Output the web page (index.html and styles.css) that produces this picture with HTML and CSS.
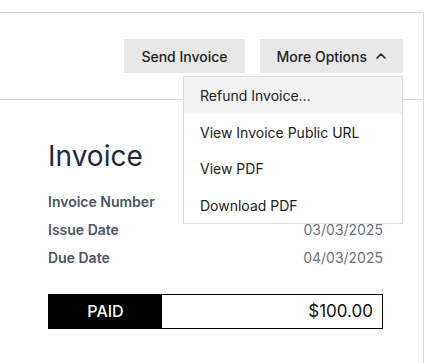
FILE: index.html
```html
<!DOCTYPE html>
<html lang="en">
<head>
    <meta charset="UTF-8">
    <meta name="viewport" content="width=device-width, initial-scale=1.0">
    <title>Invoice</title>
    <link rel="stylesheet" href="styles.css">
</head>
<body>
    <div class="invoice-card">
        <div class="invoice-actions">
            <button class="action-btn">Send Invoice</button>
            <div class="menu">
                <button class="action-btn">
                    More Options
                    <svg class="chevron" width="10" height="6" viewBox="0 0 10 6">
                        <path d="M1 5 L5 1.2 L9 5" fill="none" stroke="#222" stroke-width="1.6" stroke-linecap="round" stroke-linejoin="round"/>
                    </svg>
                </button>
                <ul class="menu-list">
                    <li class="menu-item active">Refund Invoice...</li>
                    <li class="menu-item">View Invoice Public URL</li>
                    <li class="menu-item">View PDF</li>
                    <li class="menu-item">Download PDF</li>
                </ul>
            </div>
        </div>

        <div class="invoice-body">
            <h1 class="invoice-title">Invoice</h1>
            <div class="meta-row">
                <span class="meta-label">Invoice Number</span>
                <span class="meta-value">INV-0001</span>
            </div>
            <div class="meta-row">
                <span class="meta-label">Issue Date</span>
                <span class="meta-value">03/03/2025</span>
            </div>
            <div class="meta-row">
                <span class="meta-label">Due Date</span>
                <span class="meta-value">04/03/2025</span>
            </div>

            <div class="status-bar">
                <div class="status-label">PAID</div>
                <div class="status-amount">$100.00</div>
            </div>
        </div>
    </div>
</body>
</html>
```

FILE: styles.css
```css
body, html {
    margin: 0;
    padding: 0;
    height: 100%;
    overflow: hidden;
    background: #fff;
    font-family: Inter, "Noto Sans", sans-serif;
}

.invoice-card {
    box-sizing: border-box;
    height: calc(100% - 12px);
    margin: 12px 12px 0 0;
    border: 1px solid #dcdcdc;
    border-left: 0;
    border-bottom: 0;
}

.invoice-actions {
    display: flex;
    justify-content: flex-end;
    gap: 15px;
    padding: 26px 20px;
    border-bottom: 1px solid #dcdcdc;
}

.action-btn {
    display: flex;
    align-items: center;
    height: 34px;
    padding: 0 17px;
    border: 0;
    background: #e8e8e8;
    color: #222;
    font-family: inherit;
    font-size: 14px;
    font-weight: 500;
}

.chevron {
    margin-left: 9px;
}

.menu {
    position: relative;
}

.menu-list {
    position: absolute;
    top: 37px;
    right: 0;
    width: 218px;
    margin: 0;
    padding: 0;
    list-style: none;
    background: #fff;
    border: 1px solid #dcdcdc;
    z-index: 10;
}

.menu-item {
    height: 36.5px;
    line-height: 37px;
    padding: 0 16px;
    font-size: 14px;
    color: #222;
}

.menu-item.active {
    background: #f3f3f3;
}

.invoice-body {
    padding: 39px 40px 0 48px;
}

.invoice-title {
    margin: 0 0 15px;
    font-size: 28px;
    font-weight: 400;
    line-height: 34px;
    color: #1e2a44;
}

.meta-row {
    display: flex;
    justify-content: space-between;
    height: 28px;
    line-height: 28px;
    font-size: 14px;
}

.meta-label {
    font-weight: 600;
    color: #4b5565;
}

.meta-value {
    color: #6b7280;
}

.status-bar {
    display: flex;
    margin-top: 22px;
    height: 33px;
    border: 1px solid #000;
}

.status-label {
    width: 113px;
    background: #000;
    color: #fff;
    font-size: 16px;
    font-weight: 500;
    text-align: center;
    line-height: 33px;
}

.status-amount {
    flex: 1;
    text-align: right;
    padding-right: 9px;
    font-size: 17px;
    line-height: 33px;
    color: #111;
}
```
